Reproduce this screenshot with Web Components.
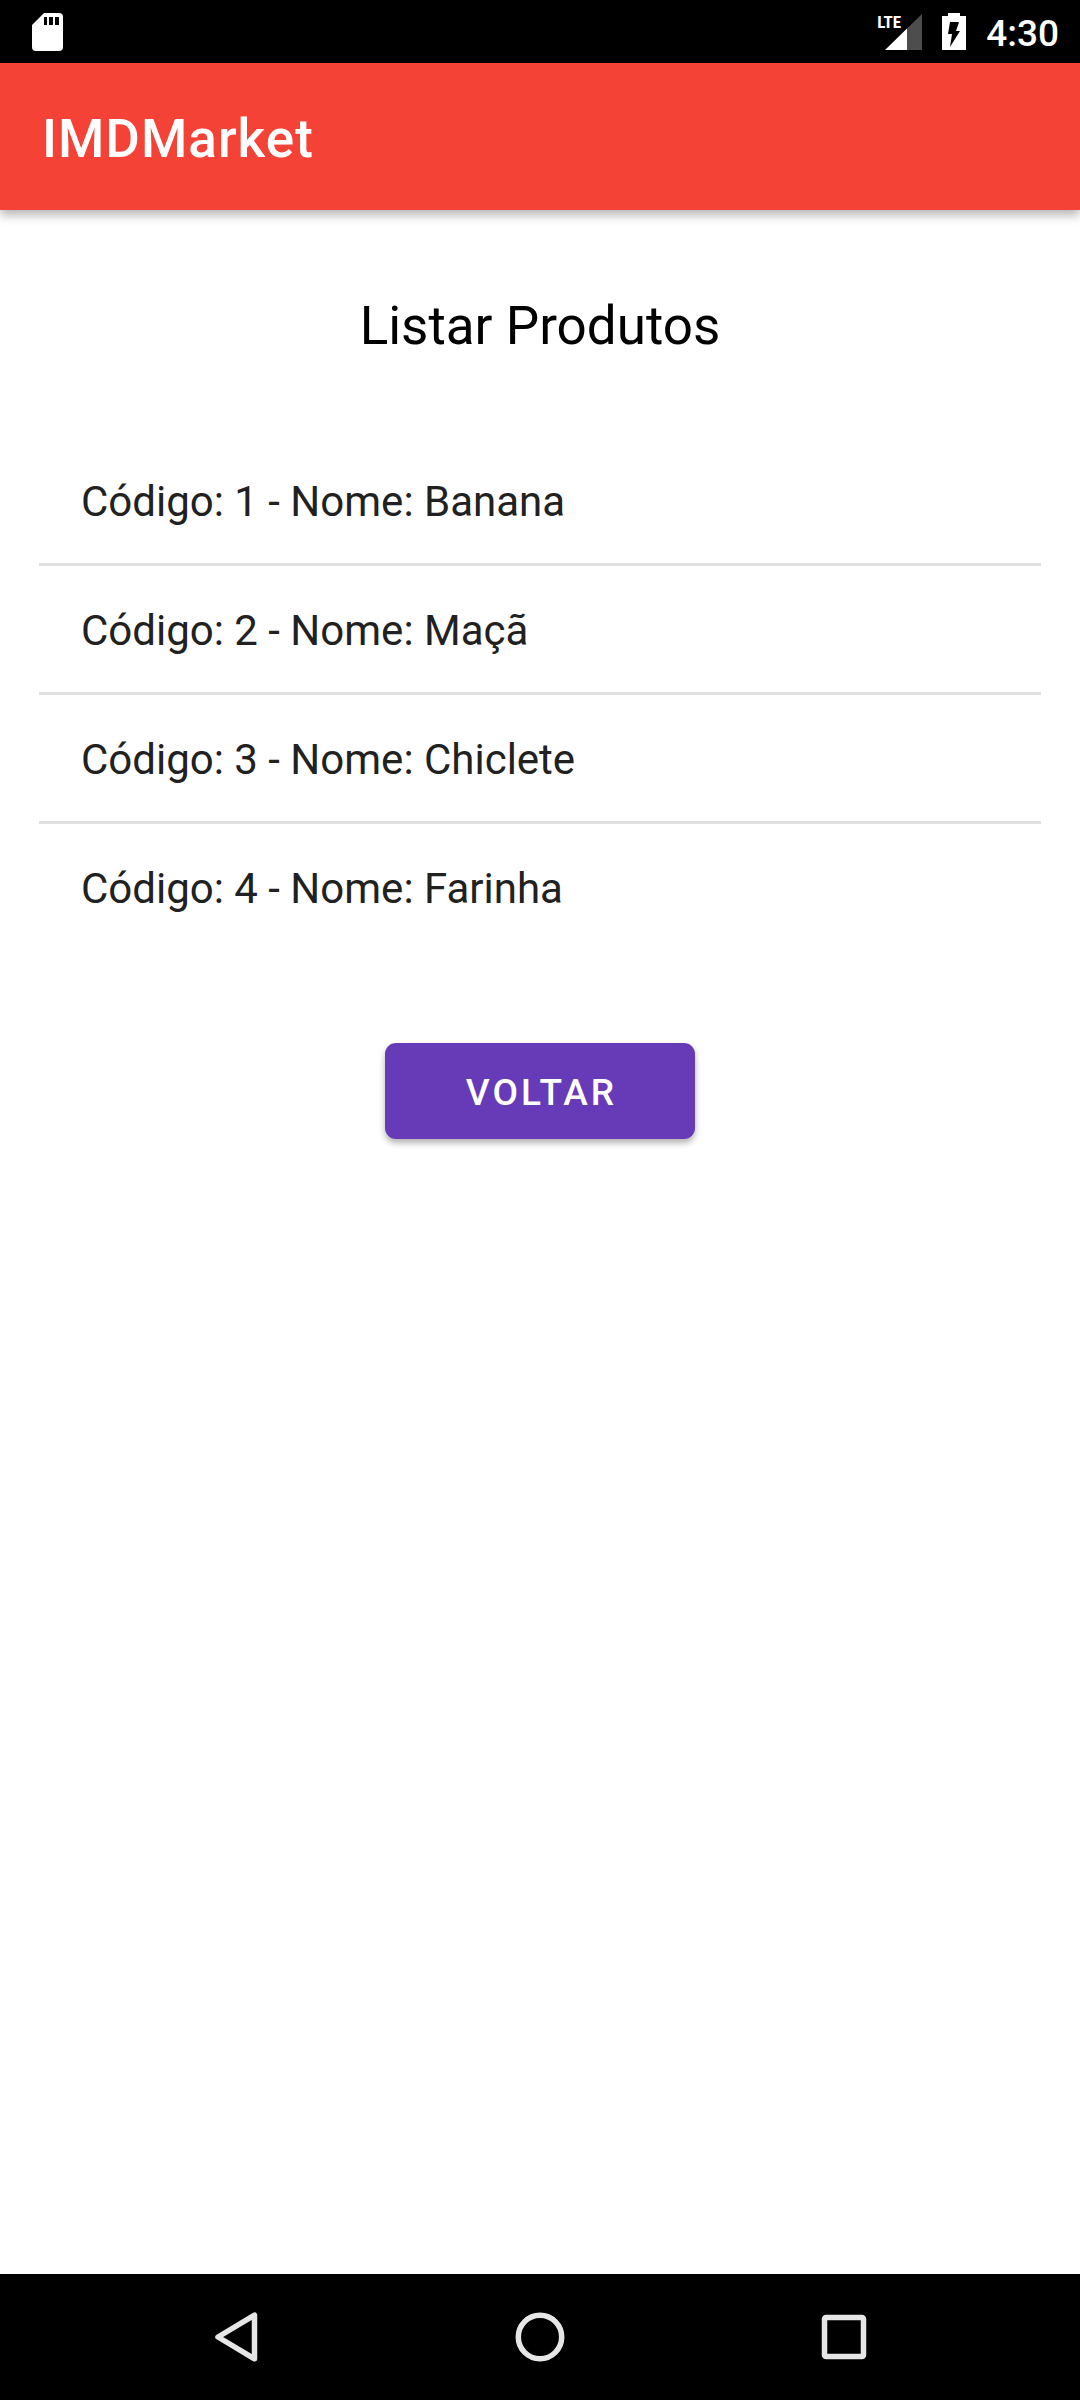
<!DOCTYPE html>
<html lang="pt-BR">
<head>
<meta charset="utf-8">
<meta name="viewport" content="width=device-width, initial-scale=1">
<title>IMDMarket</title>
<style>
  body { margin: 0; background: #fff; font-family: Roboto, "Open Sans", sans-serif; }
</style>
</head>
<body>
<market-screen>
  <status-bar slot="top" time="4:30"></status-bar>
  <app-bar slot="top">IMDMarket</app-bar>
  <screen-title>Listar Produtos</screen-title>
  <product-list>
    <product-row code="1" name="Banana"></product-row>
    <product-row code="2" name="Maçã"></product-row>
    <product-row code="3" name="Chiclete"></product-row>
    <product-row code="4" name="Farinha"></product-row>
  </product-list>
  <raised-button>VOLTAR</raised-button>
  <navigation-bar slot="bottom"></navigation-bar>
</market-screen>

<script>
  const define = (name, render) => customElements.define(name, class extends HTMLElement {
    constructor() {
      super();
      this.attachShadow({ mode: "open" });
    }
    connectedCallback() {
      this.shadowRoot.innerHTML = render(this);
    }
  });

  define("market-screen", () => `
    <style>
      :host { display: flex; flex-direction: column; min-height: 100vh; }
      main { flex: 1; display: flex; flex-direction: column; align-items: center; padding: 85px 39px; }
    </style>
    <slot name="top"></slot>
    <main><slot></slot></main>
    <slot name="bottom"></slot>`);

  define("status-bar", el => `
    <style>
      :host { display: flex; align-items: center; justify-content: space-between; box-sizing: border-box;
              height: 63px; padding: 0 21px 0 32px; background: #000; color: #fff; }
      .right { display: flex; align-items: center; gap: 20px; }
      svg { display: block; }
      .signal { display: flex; align-items: flex-start; height: 38px; }
      .lte { font: 700 17px/18px "Roboto Condensed", "Liberation Sans Narrow", "Liberation Sans", sans-serif; margin-right: -16px; }
      time { font-size: 37px; line-height: 44px; font-weight: 500; padding-top: 4px; }
    </style>
    <svg width="31" height="38" viewBox="0 0 31 38" role="img" aria-label="SD">
      <path fill="#fff" fill-rule="evenodd" d="M12 0H27Q31 0 31 4V34Q31 38 27 38H4Q0 38 0 34V12ZM12 4V12H15V4ZM17 4V12H21V4ZM23 4V12H27V4Z"/>
    </svg>
    <div class="right">
      <div class="signal">
        <span class="lte">LTE</span>
        <svg width="37" height="38" viewBox="0 0 37 38" aria-hidden="true">
          <path fill="#4d4d4d" d="M37 1V37H22V15.500Z"/>
          <path fill="#fff" d="M0 37L22 15.500V37Z"/>
        </svg>
      </div>
      <svg width="24" height="38" viewBox="0 0 24 38" aria-hidden="true">
        <path fill="#fff" d="M6 0H18V3H24V37H0V3H6Z"/>
        <path fill="#000" d="M8 9H17L14 18H18L8 34L10 21H6Z"/>
      </svg>
      <time>${el.getAttribute("time")}</time>
    </div>`);

  define("app-bar", () => `
    <style>
      :host { display: flex; align-items: center; box-sizing: border-box; height: 147px; padding: 5px 42px 0;
              background: #f44336; color: #fff; box-shadow: 0 5px 10px rgba(0,0,0,.3); }
      h1 { margin: 0; font-size: 53px; line-height: 62px; font-weight: 500; letter-spacing: 1px; }
    </style>
    <h1><slot></slot></h1>`);

  define("screen-title", () => `
    <style>
      :host { display: block; margin-bottom: 80px; color: #000; }
      h2 { margin: 0; font-size: 53px; line-height: 62px; font-weight: 400; }
    </style>
    <h2><slot></slot></h2>`);

  define("product-list", () => `
    <style>
      :host { display: block; width: 100%; margin-bottom: 93px; }
      ::slotted(:not(:last-child)) { border-bottom: 3px solid #e0e0e0; }
    </style>
    <div role="list"><slot></slot></div>`);

  define("product-row", el => `
    <style>
      :host { display: flex; align-items: center; height: 126px; }
      div { padding: 3px 42px 0; font-size: 42px; line-height: 50px; color: #212121; }
    </style>
    <div role="listitem">Código: ${el.getAttribute("code")} - Nome: ${el.getAttribute("name")}</div>`);

  define("raised-button", () => `
    <style>
      :host { display: block; }
      button { min-width: 310px; height: 96px; padding: 3px 42px 0 45px; border: 0; border-radius: 11px;
               background: #673ab7; color: #fff; font: 500 37px/44px Roboto, sans-serif; letter-spacing: 3px;
               box-shadow: 0 4px 6px rgba(0,0,0,.3); }
    </style>
    <button type="button"><slot></slot></button>`);

  define("navigation-bar", () => `
    <style>
      :host { display: flex; align-items: center; justify-content: center; gap: 204px; height: 126px; background: #000; }
      button { display: flex; align-items: center; justify-content: center; width: 100px; height: 100px;
               padding: 0; border: 0; background: none; }
      svg { fill: none; stroke: #e6e6e6; stroke-width: 5.500; stroke-linejoin: round; }
    </style>
    <button type="button" aria-label="Voltar"><svg width="50" height="50" viewBox="0 0 50 50"><path d="M43.500 3.200V46.800L7 25Z"/></svg></button>
    <button type="button" aria-label="Início"><svg width="50" height="50" viewBox="0 0 50 50"><circle cx="25" cy="25" r="21.700"/></svg></button>
    <button type="button" aria-label="Recentes"><svg width="50" height="50" viewBox="0 0 50 50"><rect x="5.500" y="5.500" width="39" height="39" rx="1.500"/></svg></button>`);
</script>
</body>
</html>
